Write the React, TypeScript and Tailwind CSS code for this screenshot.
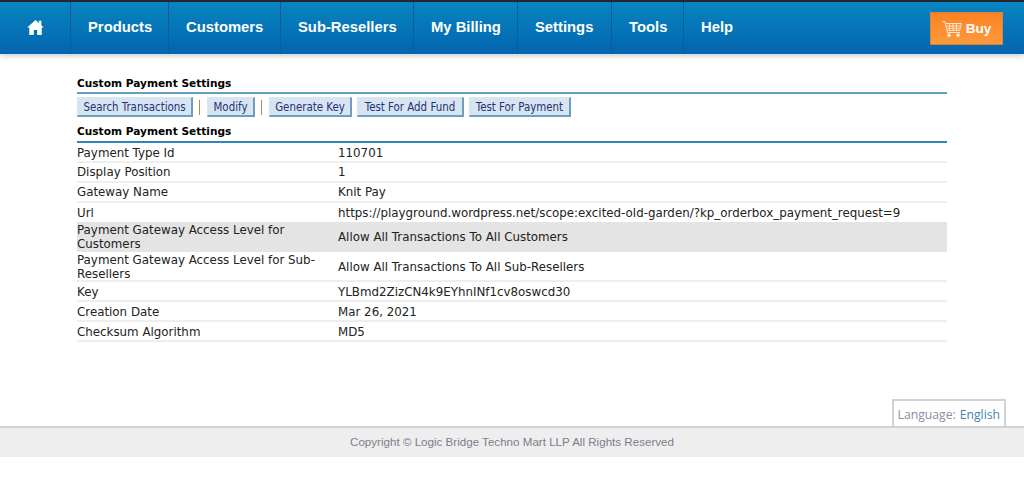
const navItems = [
  { label: 'Products', width: 'w-[98px]', border: 'border-r' },
  { label: 'Customers', width: 'w-[112px]', border: 'border-r' },
  { label: 'Sub-Resellers', width: 'w-[133px]', border: 'border-r' },
  { label: 'My Billing', width: 'w-[104px]', border: 'border-r' },
  { label: 'Settings', width: 'w-[94px]', border: 'border-r' },
  { label: 'Tools', width: 'w-[72px]', border: 'border-r' },
  { label: 'Help', width: 'w-[80px]', border: '' },
];

const rows = [
  { label: 'Payment Type Id', value: '110701', size: 'h-[20px] pt-[2px] border-b-2' },
  { label: 'Display Position', value: '1', size: 'h-[20px] border-b-2' },
  { label: 'Gateway Name', value: 'Knit Pay', size: 'h-[20px] border-b-2' },
  { label: 'Url', value: 'https://playground.wordpress.net/scope:excited-old-garden/?kp_orderbox_payment_request=9', size: 'h-[19px]' },
  { label: 'Payment Gateway Access Level for Customers', value: 'Allow All Transactions To All Customers', size: 'h-[30px] bg-[#e4e4e4]' },
  { label: 'Payment Gateway Access Level for Sub-Resellers', value: 'Allow All Transactions To All Sub-Resellers', size: 'h-[30px] pt-[2px] border-b-2' },
  { label: 'Key', value: 'YLBmd2ZizCN4k9EYhnINf1cv8oswcd30', size: 'h-[20px] pt-[2px] border-b-2' },
  { label: 'Creation Date', value: 'Mar 26, 2021', size: 'h-[20px] pt-[2px] border-b-2' },
  { label: 'Checksum Algorithm', value: 'MD5', size: 'h-[20px] pt-[2px] border-b-2' },
];

function ToolButton({ label, width }: { label: string; width: string }) {
  return (
    <button className={`${width} h-[20px] bg-[#d6e5f0] border border-[#d6e5f0] border-r-[#6f9dbd] border-b-[#6f9dbd] border-r-2 border-b-2 text-[11.4px] leading-[16px] text-[#27307a] font-['DejaVu_Sans_Condensed','DejaVu_Sans',sans-serif] whitespace-nowrap`}>
      {label}
    </button>
  );
}

function Separator() {
  return <span className="w-px h-[15px] bg-[#b58a3c] ml-[6px] mr-[7px]" />;
}

function SectionTitle() {
  return (
    <div className="h-[16px] text-[10.6px] leading-[16px] font-bold text-black font-['DejaVu_Sans',sans-serif]">
      Custom Payment Settings
    </div>
  );
}

function CartIcon() {
  return (
    <svg viewBox="0 0 20 16" className="w-[20px] h-[16px] fill-none stroke-[#fbe3cc]" strokeWidth="1">
      <path d="M0 0.7 H3 L5.5 11.5 H18" />
      <path d="M3.6 2.5 H19.4 L17.6 9.5 H5" />
      <path d="M4.4 5 H18.8 M4.8 7.3 H18.2 M7.5 2.5 V9.5 M11 2.5 V9.5 M14.5 2.5 V9.5" />
      <circle cx="7" cy="14.2" r="1.4" className="fill-[#fbe3cc]" />
      <circle cx="16" cy="14.2" r="1.4" className="fill-[#fbe3cc]" />
    </svg>
  );
}

export default function App() {
  return (
    <div className="w-[1024px] h-[487px] bg-white overflow-hidden flex flex-col font-['DejaVu_Sans',sans-serif]">
      <header className="h-[54px] shrink-0 border-t-2 border-[#23282c] bg-gradient-to-b from-[#0885c0] to-[#0465ae] flex items-center shadow-[0_2px_6px_rgba(0,0,0,0.2)] font-['Liberation_Sans',sans-serif]">
        <div className="w-[71px] h-full flex items-center justify-center border-r border-[#0a5d96]">
          <svg viewBox="0 0 20 18" className="w-[17px] h-[15px] mb-[2px] fill-white">
            <path d="M10 0 L14 3.5 L14 1 L17 1 L17 6.2 L20 9 L17.5 9 L17.5 18 L12 18 L12 12 L8 12 L8 18 L2.5 18 L2.5 9 L0 9 Z" />
          </svg>
        </div>
        {navItems.map((item) => (
          <div
            key={item.label}
            className={`${item.width} ${item.border} h-full pl-[17px] pb-[1px] flex items-center border-[#0a5d96] text-white text-[14.8px] font-bold whitespace-nowrap`}
          >
            {item.label}
          </div>
        ))}
        <div className="ml-[166px] w-[73px] h-[33px] pt-[2px] bg-gradient-to-b from-[#fc8220] to-[#fd9a3c] border border-[#d9833a] flex items-center justify-center gap-[4px] text-white text-[13.6px] font-bold">
          <CartIcon />
          Buy
        </div>
      </header>

      <main className="flex-1 pt-[21px] pl-[77px] pr-[77px]">
        <SectionTitle />
        <div className="h-[2px] mt-[1px] bg-[#5f9dc4]" />
        <div className="flex items-center mt-[3px]">
          <ToolButton label="Search Transactions" width="w-[116px]" />
          <Separator />
          <ToolButton label="Modify" width="w-[48px]" />
          <Separator />
          <div className="flex gap-[5px]">
            <ToolButton label="Generate Key" width="w-[83px]" />
            <ToolButton label="Test For Add Fund" width="w-[107px]" />
            <ToolButton label="Test For Payment" width="w-[102px]" />
          </div>
        </div>
        <div className="mt-[6px]">
          <SectionTitle />
        </div>
        <div className="h-[2px] mt-[2px] bg-[#2f86b8]" />
        <div className="text-[11.85px] leading-[14px] text-[#222]">
          {rows.map((row) => (
            <div key={row.label} className={`flex items-center border-[#eeeeee] ${row.size}`}>
              <div className="w-[261px] pr-[18px] shrink-0">{row.label}</div>
              <div className="whitespace-nowrap">{row.value}</div>
            </div>
          ))}
        </div>
      </main>

      <div className="flex justify-end pr-[18px] shrink-0">
        <div className="h-[27px] pt-[3px] px-[4px] border-2 border-b-0 border-[#d2d2d2] flex items-center gap-[4px] text-[12.2px] font-['Open_Sans',sans-serif] text-[#8d8da5]">
          Language:<span className="text-[#3f86b0]">English</span>
        </div>
      </div>
      <footer className="h-[31px] mb-[30px] pb-[2px] shrink-0 bg-[#eeeeee] border-t-2 border-[#d2d2d2] flex items-center justify-center text-[11.6px] text-[#7d7d8c] font-['Liberation_Sans',sans-serif]">
        Copyright © Logic Bridge Techno Mart LLP All Rights Reserved
      </footer>
    </div>
  );
}
